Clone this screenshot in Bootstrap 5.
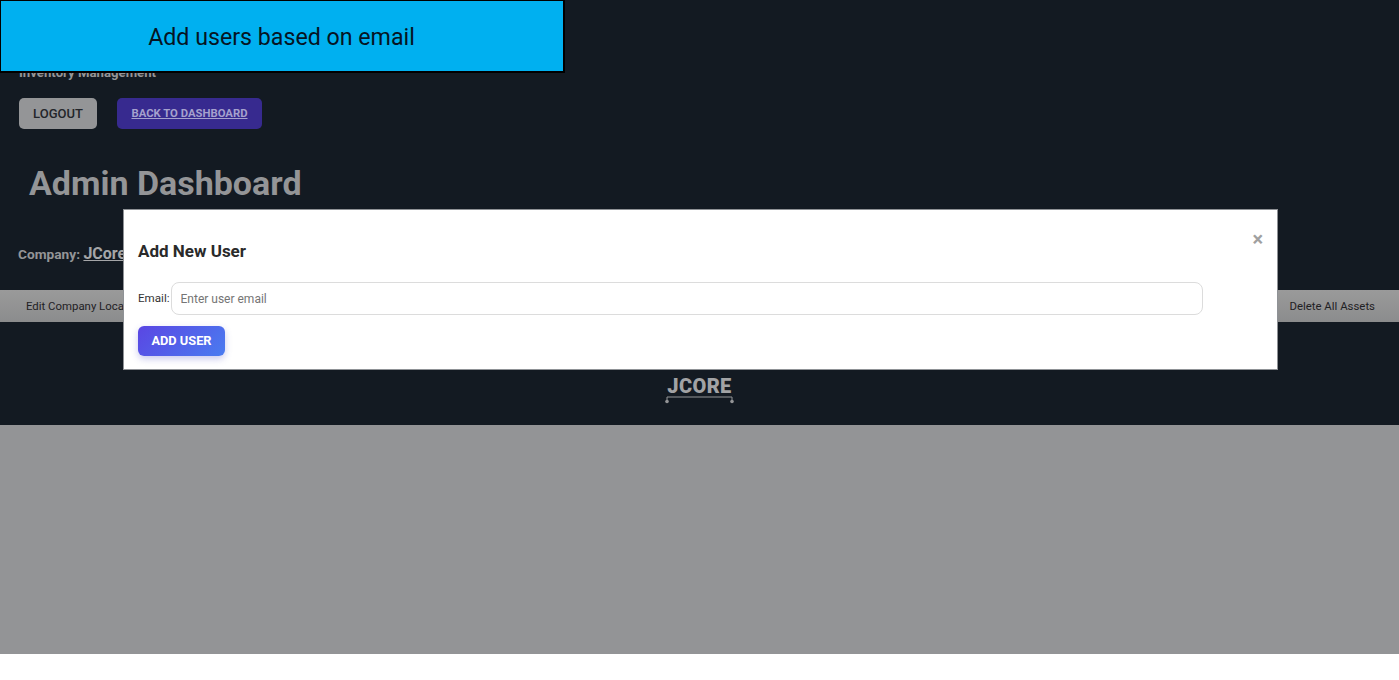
<!DOCTYPE html>
<html lang="en">
<head>
  <meta charset="UTF-8">
  <meta name="viewport" content="width=device-width, initial-scale=1.0">
  <title>Admin Dashboard</title>
  <link rel="stylesheet" href="https://cdn.jsdelivr.net/npm/bootstrap@5.3.0/dist/css/bootstrap.min.css">
  <style>
    body { background: #fff; font-family: Roboto, "Liberation Sans", sans-serif; overflow: hidden; }
    .page-wrap { height: 654px; background: #939496; position: relative; }
    .dark-area { height: 425px; background: #131a22; color: #949597; padding-top: 65px; }
    .inv-title { font-size: 13.2px; font-weight: 700; line-height: 16px; margin-left: 19px; }
    .btn-row { margin: 17px 0 0 19px; gap: 20px; }
    .btn-logout { width: 78px; height: 31px; background: #949597; color: #23252a; font-size: 13px; font-weight: 500; border-radius: 5px; border: 0; padding: 0; }
    .btn-back { width: 145px; height: 31px; background: #372a8f; color: #a5a1cd; font-size: 11.3px; font-weight: 700; border-radius: 5px; padding: 0; border: 0; line-height: 31px; text-decoration: underline; }
    .btn-back:hover { background: #372a8f; color: #a5a1cd; }
    .dash-title { font-size: 34px; font-weight: 700; line-height: 40px; margin: 34px 0 0 29px; color: #949597; }
    .company-line { font-size: 13.7px; font-weight: 700; line-height: 20px; margin: 41px 0 0 18px; }
    .company-line a { color: #a5a6a8; font-size: 16px; font-weight: 700; }
    .tab-bar { height: 32px; margin-top: 26px; background: linear-gradient(#9a9a9a, #8b8c8d); color: #1f2124; font-size: 11.4px; padding: 1px 24px 0 26px; }
    .logo-wrap { margin-top: 54px; }
    .logo-text { font-family: Roboto, sans-serif; font-weight: 900; font-size: 20px; line-height: 20px; letter-spacing: .4px; color: #a2a3a5; }
    .logo-mark { margin-top: -1px; }

    .note-box { position: absolute; left: 0; top: 0; width: 565px; height: 73px; background: #00b0f0; border: 1px solid #000; border-right-width: 2px; border-bottom-width: 2px; font-family: Roboto, sans-serif; font-size: 23.2px; color: #061423; padding: 2px 1px 0 0; }
    .user-modal { position: absolute; left: 123px; top: 209px; width: 1155px; height: 161px; background: #fff; border: 1px solid #8f9296; padding: 0 14px; color: #212529; }
    .modal-head { font-size: 17px; font-weight: 700; line-height: 22px; margin-top: 30px; color: #2a2a2a; }
    .close-x { position: absolute; right: 14px; top: 19px; font-size: 20px; font-weight: 700; line-height: 20px; color: #a0a0a0; }
    .email-row { margin-top: 20px; gap: 1px; width: 1065px; }
    .email-row label { font-size: 11.6px; color: #333; padding-top: 1px; }
    .email-input { height: 33px; font-size: 12px; border-radius: 8px; border-color: #dcdcdc; padding: 0 9px; }
    .email-input::placeholder { color: #757575; }
    .btn-add { margin-top: 11px; width: 87px; height: 30px; padding: 0; border: 0; border-radius: 6px; font-size: 12.8px; font-weight: 700; color: #fff; background: linear-gradient(135deg, #5a46e3, #4a7cf0); box-shadow: 0 3px 7px rgba(80, 80, 200, .3); }
  </style>
</head>
<body>
<div class="page-wrap">
  <div class="dark-area">
    <div class="inv-title">Inventory Management</div>
    <div class="d-flex btn-row">
      <button class="btn btn-logout">LOGOUT</button>
      <a href="#" class="btn btn-back text-center">BACK TO DASHBOARD</a>
    </div>
    <h1 class="dash-title">Admin Dashboard</h1>
    <div class="company-line">Company: <a href="#">JCore</a></div>
    <div class="tab-bar d-flex justify-content-between align-items-center">
      <span>Edit Company Location</span>
      <span>Delete All Assets</span>
    </div>
    <div class="logo-wrap d-flex flex-column align-items-center">
      <span class="logo-text">JCORE</span>
      <svg class="logo-mark" width="70" height="9" viewBox="0 0 70 9" fill="none">
        <path d="M2 6V2H67V6" stroke="#949597" stroke-width="1"/>
        <circle cx="2" cy="6.5" r="1.8" fill="#949597"/>
        <circle cx="67" cy="6.5" r="1.8" fill="#949597"/>
      </svg>
    </div>
  </div>

  <!-- Popup over the dimmed page -->
  <div class="user-modal">
    <span class="close-x">×</span>
    <div class="modal-head">Add New User</div>
    <div class="d-flex align-items-center email-row">
      <label for="userEmail">Email:</label>
      <input type="email" id="userEmail" class="form-control email-input" placeholder="Enter user email">
    </div>
    <button class="btn btn-add">ADD USER</button>
  </div>

  <!-- Annotation box -->
  <div class="note-box d-flex align-items-center justify-content-center">Add users based on email</div>
</div>
<script src="https://cdn.jsdelivr.net/npm/bootstrap@5.3.0/dist/js/bootstrap.bundle.min.js"></script>
</body>
</html>
